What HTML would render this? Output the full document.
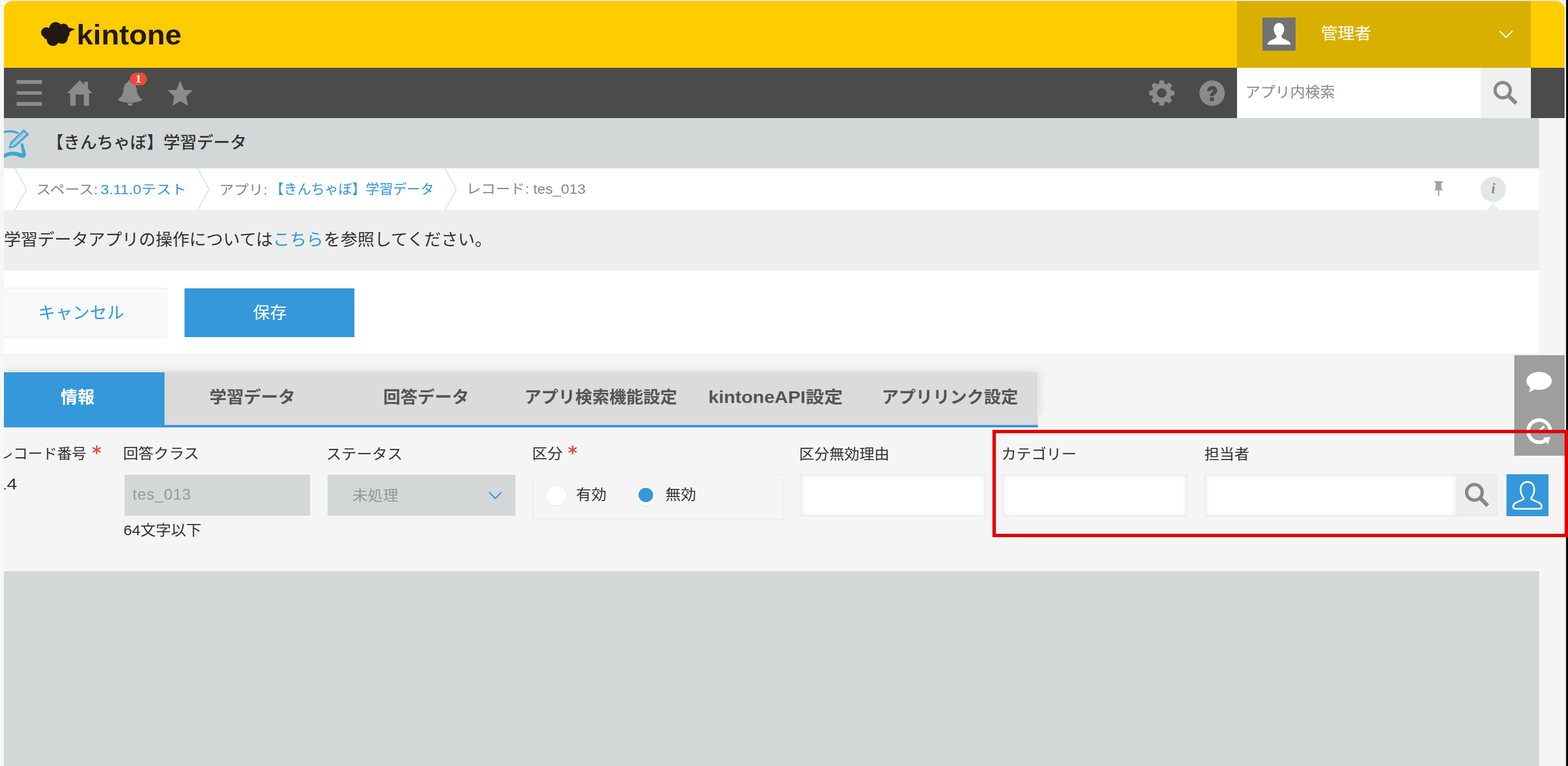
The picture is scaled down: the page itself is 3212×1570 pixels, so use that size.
<!DOCTYPE html>
<html lang="ja"><head><meta charset="utf-8"><title>kintone</title>
<style>
html,body{margin:0;padding:0}
body{width:3212px;height:1570px;overflow:hidden;background:#f6f6f6;position:relative;
font-family:"Liberation Sans",sans-serif;color:#333}
.b{position:absolute;display:block;box-sizing:border-box}
.t{position:absolute;white-space:nowrap;line-height:0}
.t svg{display:block;overflow:visible}
.t svg text{font-family:"Liberation Sans","Noto Sans CJK JP",sans-serif}
.sr{position:absolute;width:1px;height:1px;margin:-1px;padding:0;overflow:hidden;clip:rect(0 0 0 0);clip-path:inset(50%);border:0;white-space:nowrap;font-size:1px;line-height:1px}
.lt{position:absolute;white-space:nowrap;font-family:"Liberation Sans",sans-serif}
</style></head>
<body>
<div class="b" style="left:8px;top:0px;width:3197px;height:2px;background:#e9ebf8;"></div>
<div class="b" style="left:0px;top:0px;width:8px;height:1570px;background:#f7f7f7;"></div>
<div class="b" style="left:3205px;top:0px;width:3px;height:1570px;background:#f4f4f4;border-left:1px solid #e6e6e6"></div>
<div class="b" style="left:3208px;top:0px;width:4px;height:1570px;background:#000;"></div>
<div class="b" style="left:3153px;top:242px;width:52px;height:1328px;background:#f5f5f5;"></div>
<div class="b" style="left:8px;top:2px;width:3197px;height:137px;background:#ffcc00;border-radius:17px 17px 0 0"></div>
<div class="b" style="left:2534px;top:2px;width:602px;height:137px;background:#dab000;"></div>
<div class="b" style="left:8px;top:139px;width:3197px;height:103px;background:#4b4b4b;"></div>
<div class="b" style="left:8px;top:140px;width:2526px;height:1px;background:#40455a;"></div>
<div class="b" style="left:3136px;top:140px;width:69px;height:1px;background:#40455a;"></div>
<div class="b" style="left:8px;top:242px;width:3145px;height:103px;background:#d4d7d7;"></div>
<div class="b" style="left:8px;top:345px;width:3145px;height:87px;background:#fff;border-bottom:1px solid #e3e7e8"></div>
<div class="b" style="left:8px;top:432px;width:3145px;height:122px;background:#eeeeee;border-bottom:1px solid #e3e7e8"></div>
<div class="b" style="left:8px;top:554px;width:3145px;height:173px;background:#fff;border-bottom:1px solid #e3e7e8"></div>
<div class="b" style="left:8px;top:727px;width:3145px;height:444px;background:#f5f5f5;"></div>
<div class="b" style="left:8px;top:1171px;width:3145px;height:399px;background:#d4d7d7;"></div>
<svg class="b" style="left:0px;top:0px;" width="400" height="140" viewBox="0 0 400 140"><g fill="#231815"><circle cx="114.1" cy="58.6" r="13.3"/><circle cx="130" cy="59.3" r="10.8"/><circle cx="94.5" cy="66.5" r="10.4"/><circle cx="108.5" cy="81.5" r="12.6"/><circle cx="127.5" cy="78" r="11.5"/><circle cx="133" cy="68.8" r="9.6"/><circle cx="114" cy="70" r="19"/><circle cx="97.5" cy="72" r="9"/><path d="M136,55.5 Q146,57 154,60.6 Q147,62 141,67 Z"/></g></svg>
<div class="t" style="left:157.1px;top:28.2px"><svg width="216.8" height="83.2"><text x="0" y="63.1" font-size="57.4" font-weight="bold" fill="#231815" textLength="214.8" lengthAdjust="spacingAndGlyphs">kintone</text></svg></div>
<div class="b" style="left:2586.3px;top:36.4px;width:68px;height:67.9px;background:#717272;"></div>
<svg class="b" style="left:2586.3px;top:36.4px;" width="68" height="68" viewBox="0 0 68 68"><path fill="#fff" d="M33.9,11.1 C40.5,11.1 44.6,16.5 44.6,23.6 C44.6,29.5 42,34 39.3,37 L39.3,41.3 L52,47.5 C56,49.5 57.5,52 57.9,55.4 L10.3,55.4 C10.7,52 12.2,49.5 16.2,47.5 L28.6,41.3 L28.6,37 C26,34 23.3,29.5 23.3,23.6 C23.3,16.5 27.4,11.1 33.9,11.1 Z"/></svg>
<div class="t" style="left:2705.8px;top:43.3px"><svg width="105.1" height="48.6"><text x="0" y="36.9" font-size="33.5" fill="#fff" textLength="103.1" lengthAdjust="spacingAndGlyphs">管理者</text></svg></div>
<svg class="b" style="left:3066px;top:57px;" width="40" height="30" viewBox="0 0 40 30"><path d="M6,6.5 L19,19.5 L32,6.5" fill="none" stroke="#fff" stroke-width="2.6"/></svg>
<div class="b" style="left:34px;top:164.3px;width:52px;height:7.5px;background:#8b8b8b;"></div>
<div class="b" style="left:34px;top:186.9px;width:52px;height:7.5px;background:#8b8b8b;"></div>
<div class="b" style="left:34px;top:209.3px;width:52px;height:7.5px;background:#8b8b8b;"></div>
<svg class="b" style="left:0px;top:140px;" width="420" height="100" viewBox="0 140 420 100"><path fill="#8b8b8b" d="M163.3,164.3 L189.2,190.9 L182.4,190.9 L182.4,216.8 L171.6,216.8 L171.6,193.7 L154.9,193.7 L154.9,216.8 L143.8,216.8 L143.8,190.9 L137.3,190.9 Z M172.4,167.5 H180.3 V183 L172.4,175 Z"/><path fill="#8b8b8b" d="M262.6,164.7 H266.2 V168.3 C274,169 279,174.5 280,183 C281,193 283.5,198.5 291.2,203.6 C291.2,206.5 283,210.4 266.4,210.4 C250,210.4 241.7,206.5 241.7,203.6 C249.5,198.5 252,193 253,183 C254,174.5 258,169.5 262.6,168.3 Z M260.7,211.5 H272.2 C272.2,214.5 269.5,216.9 266.4,216.9 C263.3,216.9 260.7,214.5 260.7,211.5 Z"/><path fill="#8b8b8b" d="M369,165.4 L377,184.2 L394.9,185 L381.3,197.4 L385.3,216.8 L369,207.6 L353.6,216.8 L357,197.4 L343.2,185 L361.2,184.2 Z"/></svg>
<div class="b" style="left:266px;top:149.3px;width:35px;height:26.2px;background:#e74c3c;border-radius:13.1px"></div>
<div class="lt" style="left:266px;top:149.3px;width:35px;height:26.2px;line-height:26.2px;text-align:center;font-family:'Liberation Serif',serif;font-weight:bold;font-size:23px;color:#fff">1</div>
<svg class="b" style="left:2340px;top:150px;" width="80" height="82" viewBox="2340 150 80 82"><path fill="#8b8b8b" fill-rule="evenodd" stroke="#8b8b8b" stroke-width="1.2" stroke-linejoin="round" d="M2374.7,171.7 L2376,165.3 L2383.6,165.3 L2384.9,171.7 L2389.5,173.6 L2395,170 L2400.4,175.4 L2396.8,180.9 L2398.7,185.5 L2405.1,186.8 L2405.1,194.4 L2398.7,195.7 L2396.8,200.3 L2400.4,205.8 L2395,211.2 L2389.5,207.6 L2384.9,209.5 L2383.6,215.9 L2376,215.9 L2374.7,209.5 L2370.1,207.6 L2364.6,211.2 L2359.2,205.8 L2362.8,200.3 L2360.9,195.7 L2354.5,194.4 L2354.5,186.8 L2360.9,185.5 L2362.8,180.9 L2359.2,175.4 L2364.6,170 L2370.1,173.6 Z M2369.5,190.6 a10.3,10.3 0 1,0 20.6,0 a10.3,10.3 0 1,0 -20.6,0 Z"/></svg>
<div class="b" style="left:2457px;top:164.6px;width:52px;height:52px;background:#8b8b8b;border-radius:50%"></div>
<svg class="b" style="left:2457px;top:164px;" width="52" height="53" viewBox="2457 164 52 53"><path d="M2476.4,186.8 C2476.6,182.3 2479.3,180 2483.3,180 C2487.3,180 2489.7,182.2 2489.7,185.2 C2489.7,188 2487.8,189.5 2485.5,191.2 C2483,193 2482.2,194.3 2482.2,196.9" fill="none" stroke="#4b4b4b" stroke-width="7.4"/><rect x="2478.4" y="199.7" width="8.3" height="7.4" fill="#4b4b4b"/></svg>
<span class="sr">?</span>
<div class="b" style="left:2534px;top:139px;width:499px;height:103px;background:#fff;"></div>
<div class="b" style="left:3033px;top:139px;width:103px;height:103px;background:#f0f0f0;"></div>
<div class="t" style="left:2551.3px;top:166.4px"><svg width="185.7" height="43.5"><text x="0" y="33" font-size="30" fill="#8a8a8a" textLength="183.7" lengthAdjust="spacingAndGlyphs">アプリ内検索</text></svg></div>
<svg class="b" style="left:3040px;top:150px;" width="90" height="80" viewBox="3040 150 90 80"><circle cx="3078.2" cy="184.8" r="15.6" fill="none" stroke="#888" stroke-width="6.6"/><path d="M3090.3,196.6 L3106,212" stroke="#888" stroke-width="7.8" fill="none"/></svg>
<svg class="b" style="left:8px;top:250px;" width="70" height="90" viewBox="8 250 70 90"><g fill="none" stroke="#39a9d4" stroke-linejoin="miter" stroke-linecap="butt"><path stroke-width="4.4" d="M4,272.6 C13,268.2 26,267.6 37.6,273.2"/><path stroke-width="3.3" d="M48.6,267.5 L57.1,275.5 L31,299.6 L20.1,302.5 L22.8,292.3 Z"/><path stroke-width="1.6" stroke-opacity=".7" d="M50.3,271.3 L25,294.8 M53.6,274.6 L29.6,297 M23.2,294.2 C26,294.6 29,296.6 30.3,299.5"/></g><path fill="#39a9d4" d="M42.2,294.7 L47.2,293.6 L52.9,314.3 C53.8,320 50.5,324 46,323.6 C40,323 33,318.6 25,318.6 C18,318.6 12,322 4,326.5 L4,317.5 C12,313 20,310.6 27,310.8 C34,311 39,313.5 45.4,314 Z"/></svg>
<div class="t" style="left:96.2px;top:265.9px"><svg width="411.2" height="49.4"><text x="0" y="37.5" font-size="34.1" font-weight="500" fill="#333" textLength="409.2" lengthAdjust="spacingAndGlyphs">【きんちゃぼ】学習データ</text></svg></div>
<svg class="b" style="left:8px;top:345px;" width="1000" height="87" viewBox="8 345 1000 87"><path d="M30.4,345 L54.2,388 L30.4,431" fill="none" stroke="#e1e6e7" stroke-width="2.5"/><path d="M404.8,345 L427.9,388 L404.8,431" fill="none" stroke="#e1e6e7" stroke-width="2.5"/><path d="M911.4,345 L934.9,388 L911.4,431" fill="none" stroke="#e1e6e7" stroke-width="2.5"/></svg>
<div class="t" style="left:74px;top:367.2px"><svg width="128.4" height="40.2"><text x="0" y="30.5" font-size="27.75" fill="#888" textLength="126.4" lengthAdjust="spacingAndGlyphs">スペース:</text></svg></div>
<div class="t" style="left:206.3px;top:366.8px"><svg width="177.8" height="40.2"><text x="0" y="30.5" font-size="27.75" fill="#3498db" textLength="175.8" lengthAdjust="spacingAndGlyphs">3.11.0テスト</text></svg></div>
<div class="t" style="left:448.6px;top:367.8px"><svg width="100.9" height="40.2"><text x="0" y="30.5" font-size="27.75" fill="#888" textLength="98.9" lengthAdjust="spacingAndGlyphs">アプリ:</text></svg></div>
<div class="t" style="left:553.1px;top:367.1px"><svg width="338" height="40.6"><text x="0" y="30.8" font-size="28" fill="#3498db" textLength="336" lengthAdjust="spacingAndGlyphs">【きんちゃぼ】学習データ</text></svg></div>
<div class="t" style="left:955.3px;top:365.6px"><svg width="246.4" height="40.2"><text x="0" y="30.5" font-size="27.75" fill="#888" textLength="244.4" lengthAdjust="spacingAndGlyphs">レコード: tes_013</text></svg></div>
<svg class="b" style="left:2930px;top:365px;" width="34" height="46" viewBox="2930 365 34 46"><path fill="#a3a3a3" d="M2938.2,371.2 H2955.5 V374.6 H2952.7 V386.5 C2954.7,387.3 2955.6,388.4 2955.6,390.2 H2948.2 V399 L2946.9,404.3 L2945.6,399 V390.2 H2938.2 C2938.2,388.4 2939.1,387.3 2941.1,386.5 V374.6 H2938.2 Z"/></svg>
<div class="b" style="left:3033px;top:362.2px;width:51.6px;height:51.6px;background:#e3e7e8;border-radius:50%"></div>
<div class="lt" style="left:3033px;top:362.2px;width:51.6px;height:51.6px;line-height:47px;text-align:center;font-family:'Liberation Serif',serif;font-style:italic;font-weight:bold;font-size:30px;color:#888">i</div>
<svg class="b" style="left:3040px;top:414px;" width="40" height="19" viewBox="3040 414 40 19"><path d="M3042.9,432 L3058.7,416.4 L3074.4,432 Z" fill="#eee"/></svg>
<div class="t" style="left:8.4px;top:464.6px"><svg width="552.8" height="50.2"><text x="0" y="38.1" font-size="34.6" fill="#333" textLength="550.8" lengthAdjust="spacingAndGlyphs">学習データアプリの操作については</text></svg></div>
<div class="t" style="left:559.2px;top:464.6px"><svg width="105.3" height="50.2"><text x="0" y="38.1" font-size="34.6" fill="#3498db" textLength="103.3" lengthAdjust="spacingAndGlyphs">こちら</text></svg></div>
<div class="t" style="left:662.5px;top:464.6px"><svg width="346.3" height="50.2"><text x="0" y="38.1" font-size="34.6" fill="#333" textLength="344.3" lengthAdjust="spacingAndGlyphs">を参照してください。</text></svg></div>
<div class="b" style="left:-10px;top:589.5px;width:351.5px;height:102px;background:#f7f9fa;border:1px solid #e3e7e8"></div>
<div class="b" style="left:0px;top:560px;width:8px;height:160px;background:#f7f7f7;"></div>
<div class="t" style="left:77.5px;top:614.6px"><svg width="178.3" height="50.2"><text x="0" y="38.1" font-size="34.6" fill="#3498db" textLength="176.3" lengthAdjust="spacingAndGlyphs">キャンセル</text></svg></div>
<div class="b" style="left:377.5px;top:590.5px;width:348px;height:100.3px;background:#3498db;"></div>
<div class="t" style="left:517.5px;top:615.3px"><svg width="71.7" height="50.2"><text x="0" y="38.1" font-size="34.6" fill="#fff" textLength="69.7" lengthAdjust="spacingAndGlyphs">保存</text></svg></div>
<div class="b" style="left:8px;top:763px;width:2119.2px;height:85.4px;background:#dbdbdb;box-shadow:0 0 16px rgba(0,0,0,.15);border-right:1.6px solid #fff"></div>
<div class="b" style="left:8px;top:763px;width:2117.5px;height:113px;background:#dbdbdb;"></div>
<div class="b" style="left:0px;top:740px;width:8px;height:160px;background:#f7f7f7;"></div>
<div class="b" style="left:8px;top:763px;width:328.5px;height:113px;background:#3498db;"></div>
<div class="b" style="left:8px;top:870.7px;width:2117.5px;height:5.3px;background:#3498db;"></div>
<div class="t" style="left:123.5px;top:787.6px"><svg width="71.5" height="50.2"><text x="0" y="38.1" font-size="34.6" font-weight="bold" fill="#fff" textLength="69.5" lengthAdjust="spacingAndGlyphs">情報</text></svg></div>
<div class="t" style="left:428.9px;top:788.1px"><svg width="177.9" height="50.2"><text x="0" y="38.1" font-size="34.6" font-weight="bold" fill="#555" textLength="175.9" lengthAdjust="spacingAndGlyphs">学習データ</text></svg></div>
<div class="t" style="left:785.4px;top:788px"><svg width="177.9" height="50.2"><text x="0" y="38.1" font-size="34.6" font-weight="bold" fill="#555" textLength="175.9" lengthAdjust="spacingAndGlyphs">回答データ</text></svg></div>
<div class="t" style="left:1074.4px;top:787.9px"><svg width="315.1" height="50.2"><text x="0" y="38.1" font-size="34.6" font-weight="bold" fill="#555" textLength="313.1" lengthAdjust="spacingAndGlyphs">アプリ検索機能設定</text></svg></div>
<div class="t" style="left:1450.7px;top:787.6px"><svg width="277.5" height="50.2"><text x="0" y="38.1" font-size="34.6" font-weight="bold" fill="#555" textLength="275.5" lengthAdjust="spacingAndGlyphs">kintoneAPI設定</text></svg></div>
<div class="t" style="left:1806.1px;top:787.9px"><svg width="281.4" height="50.2"><text x="0" y="38.1" font-size="34.6" font-weight="bold" fill="#555" textLength="279.4" lengthAdjust="spacingAndGlyphs">アプリリンク設定</text></svg></div>
<div class="b" style="left:8px;top:890px;width:240px;height:140px;overflow:hidden">
<div class="t" style="margin-left:-8px;margin-top:-890px;left:-3px;top:907.1px"><svg width="182" height="43.5"><text x="0" y="33" font-size="30" fill="#333" textLength="180" lengthAdjust="spacingAndGlyphs">レコード番号</text></svg></div>
</div>
<div class="t" style="left:13.8px;top:969px"><svg width="22.9" height="45.3"><text x="0" y="34.4" font-size="31.2" fill="#333" textLength="20.9" lengthAdjust="spacingAndGlyphs">4</text></svg></div>
<div class="b" style="left:8px;top:1000.8px;width:3.9px;height:2.7px;background:#333;"></div>
<span class="sr">14</span>
<svg class="b" style="left:185.6px;top:909.7px;" width="24" height="24" viewBox="185.6 909.7 24 24"><path d="M197.6,912.4 L197.6,931 M205.7,917.1 L189.5,926.4 M205.7,926.4 L189.5,917.1 " stroke="#e74c3c" stroke-width="2.9" fill="none"/></svg><span class="sr">*</span>
<div class="t" style="left:252.1px;top:907.4px"><svg width="157.9" height="43.5"><text x="0" y="33" font-size="30" fill="#333" textLength="155.9" lengthAdjust="spacingAndGlyphs">回答クラス</text></svg></div>
<div class="b" style="left:254.9px;top:973px;width:379.8px;height:84.3px;background:#d4d7d7;"></div>
<div class="lt" style="left:271.6px;top:970.9px;height:84px;line-height:84px;font-size:31.6px;letter-spacing:1.1px;color:#989898">tes_013</div>
<div class="t" style="left:253.2px;top:1064.4px"><svg width="161.5" height="43.5"><text x="0" y="33" font-size="30" fill="#333" textLength="159.5" lengthAdjust="spacingAndGlyphs">64文字以下</text></svg></div>
<div class="t" style="left:667.5px;top:907.5px"><svg width="158.7" height="43.5"><text x="0" y="33" font-size="30" fill="#333" textLength="156.7" lengthAdjust="spacingAndGlyphs">ステータス</text></svg></div>
<div class="b" style="left:670.8px;top:973px;width:384.9px;height:84.3px;background:#d4d7d7;"></div>
<div class="t" style="left:722.1px;top:992.5px"><svg width="95.6" height="43.5"><text x="0" y="33" font-size="30" fill="#979797" textLength="93.6" lengthAdjust="spacingAndGlyphs">未処理</text></svg></div>
<svg class="b" style="left:995px;top:1000px;" width="40" height="30" viewBox="995 1000 40 30"><path d="M1001.8,1008.6 L1014.6,1021.6 L1027.4,1008.6" fill="none" stroke="#3498db" stroke-width="2.6"/></svg>
<div class="t" style="left:1089.7px;top:906.8px"><svg width="64.4" height="43.5"><text x="0" y="33" font-size="30" fill="#333" textLength="62.4" lengthAdjust="spacingAndGlyphs">区分</text></svg></div>
<svg class="b" style="left:1161.3px;top:909.7px;" width="24" height="24" viewBox="1161.3 909.7 24 24"><path d="M1173.3,912.4 L1173.3,931 M1181.4,917.1 L1165.2,926.4 M1181.4,926.4 L1165.2,917.1 " stroke="#e74c3c" stroke-width="2.9" fill="none"/></svg><span class="sr">*</span>
<div class="b" style="left:1091px;top:972.4px;width:513.3px;height:92.2px;background:transparent;border:1px solid #e3e7e8"></div>
<div class="b" style="left:1117px;top:992.5px;width:44.8px;height:44.8px;background:#fff;border-radius:50%;border:1px solid #e3e7e8;box-shadow:inset 0 1px 3px rgba(0,0,0,.06)"></div>
<div class="t" style="left:1180.2px;top:990.9px"><svg width="64.3" height="43.5"><text x="0" y="33" font-size="30" fill="#333" textLength="62.3" lengthAdjust="spacingAndGlyphs">有効</text></svg></div>
<div class="b" style="left:1300.6px;top:992.5px;width:44.8px;height:44.8px;background:#fff;border-radius:50%;border:1px solid #e3e7e8;box-shadow:inset 0 1px 3px rgba(0,0,0,.06)"></div><div class="b" style="left:1308.4px;top:1000.3px;width:29.2px;height:29.2px;background:#3498db;border-radius:50%"></div>
<div class="t" style="left:1363.2px;top:991px"><svg width="64.9" height="43.5"><text x="0" y="33" font-size="30" fill="#333" textLength="62.9" lengthAdjust="spacingAndGlyphs">無効</text></svg></div>
<div class="t" style="left:1637.2px;top:907.6px"><svg width="186.9" height="43.5"><text x="0" y="33" font-size="30" fill="#333" textLength="184.9" lengthAdjust="spacingAndGlyphs">区分無効理由</text></svg></div>
<div class="b" style="left:1639.6px;top:972.4px;width:379.3px;height:85.4px;background:#fff;border:1px solid #e3e7e8;box-shadow:inset 0 0 9px 3px #f0f0f0"></div>
<div class="t" style="left:2050.6px;top:908.2px"><svg width="156.1" height="43.5"><text x="0" y="33" font-size="30" fill="#333" textLength="154.1" lengthAdjust="spacingAndGlyphs">カテゴリー</text></svg></div>
<div class="b" style="left:2053.7px;top:972.4px;width:378.5px;height:85.4px;background:#fff;border:1px solid #e3e7e8;box-shadow:inset 0 0 9px 3px #f0f0f0"></div>
<div class="t" style="left:2467.1px;top:908.3px"><svg width="94.3" height="43.5"><text x="0" y="33" font-size="30" fill="#333" textLength="92.3" lengthAdjust="spacingAndGlyphs">担当者</text></svg></div>
<div class="b" style="left:2467.9px;top:972.4px;width:516.1px;height:85.4px;background:#fff;border:1px solid #e3e7e8;box-shadow:inset 0 0 9px 3px #f0f0f0"></div>
<div class="b" style="left:2983.2px;top:972.4px;width:85.1px;height:85.4px;background:#eeeeee;border:1px solid #e3e7e8"></div>
<svg class="b" style="left:2990px;top:980px;" width="75" height="70" viewBox="2990 980 75 70"><circle cx="3020.2" cy="1009.1" r="16" fill="none" stroke="#888" stroke-width="6.8"/><path d="M3032.5,1021.4 L3047.6,1036.4" stroke="#888" stroke-width="8" fill="none"/></svg>
<div class="b" style="left:3086px;top:972.2px;width:86px;height:85.6px;background:#3498db;"></div>
<svg class="b" style="left:3086px;top:972px;" width="86" height="86" viewBox="3086 972 86 86"><path fill="none" stroke="#fff" stroke-width="3.5" stroke-linejoin="round" d="M3128.9,987.8 C3137.5,987.8 3142.8,994.5 3142.8,1003 C3142.8,1010 3140.3,1015.5 3137.5,1019.5 C3136.2,1021.5 3136.5,1023 3138.5,1024 L3153,1030.5 C3156.5,1032.3 3158,1035.5 3158,1038.5 C3158,1041 3156.5,1042.7 3154,1042.7 L3103.8,1042.7 C3101.3,1042.7 3099.8,1041 3099.8,1038.5 C3099.8,1035.5 3101.3,1032.3 3104.8,1030.5 L3119.3,1024 C3121.3,1023 3121.6,1021.5 3120.3,1019.5 C3117.5,1015.5 3115,1010 3115,1003 C3115,994.5 3120.3,987.8 3128.9,987.8 Z"/></svg>
<div class="b" style="left:3101.6px;top:728.2px;width:103.2px;height:205.9px;background:#9e9e9e;"></div>
<svg class="b" style="left:3101px;top:728px;" width="104" height="206" viewBox="3101 728 104 206"><ellipse cx="3152.8" cy="780.7" rx="26.1" ry="18.4" fill="#fff"/><path fill="#fff" d="M3133.3,790 C3135.5,795 3134.5,799.5 3131.2,803.8 C3136.5,802.5 3141,800 3145,796.8 Z"/><g fill="none" stroke="#fff"><path stroke-width="7.4" d="M3169.2,899.6 A22.7,22.7 0 1 1 3175.7,883"/><path d="M3153,883.8 L3163.3,873.4" stroke-width="4.6"/><path d="M3153,883.8 L3141,885" stroke-width="4.6"/></g><path fill="#fff" d="M3161.5,896.8 L3176.2,895.4 L3170.8,911 Z"/></svg>
<div class="b" style="left:2033px;top:881px;width:1179px;height:219.8px;background:transparent;border:7px solid #e00000"></div>
<div class="b" style="left:3208px;top:0px;width:4px;height:881px;background:#000;"></div>
<div class="b" style="left:3208px;top:1100.8px;width:4px;height:469.2px;background:#000;"></div>
</body></html>
